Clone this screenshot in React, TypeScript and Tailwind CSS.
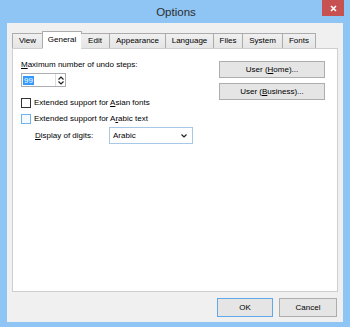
const tabs = ["View", "General", "Edit", "Appearance", "Language", "Files", "System", "Fonts"];
const tabWidths = [31, 40, 29, 56, 48, 29, 40, 33];

const Chevron = ({ up }: { up?: boolean }) => (
  <svg width="6" height="4" viewBox="0 0 6 4">
    <path d={up ? "M0.5 3.5 L3 1 L5.5 3.5" : "M0.5 0.5 L3 3 L5.5 0.5"} fill="none" stroke="#222" strokeWidth="1.2" />
  </svg>
);

const App = () => {
  return (
    <div
      className="w-[350px] h-[327px] bg-[#8ec5f4] flex flex-col text-[8px] text-black select-none"
      style={{ fontFamily: '"Liberation Sans", Arial, sans-serif' }}
    >
      {/* title bar */}
      <div className="h-[23px] flex items-start shrink-0">
        <div className="w-[28px]" />
        <div className="flex-1 text-center text-[11.5px] text-[#2d2d2d] pt-[4px] pl-[2px]">Options</div>
        <div className="w-[22px] h-[16px] bg-[#c75050] flex items-center justify-center mr-[6px]">
          <svg width="7" height="7" viewBox="0 0 7 7">
            <path d="M1 1 L6 6 M6 1 L1 6" stroke="#fff" strokeWidth="1.6" />
          </svg>
        </div>
      </div>

      {/* client area */}
      <div className="flex-1 mx-[7px] mb-[5px] bg-[#f0f0f0] flex flex-col px-[5px] pt-[8px]">
        {/* tabs */}
        <div className="flex items-end h-[17px] relative z-10">
          {tabs.map((t, i) =>
            i === 1 ? (
              <div
                key={t}
                style={{ width: tabWidths[i] }}
                className="h-[18px] -mb-px -ml-px -mr-px bg-white border border-[#acacac] border-b-white flex items-center justify-center pb-[1px]"
              >
                {t}
              </div>
            ) : (
              <div
                key={t}
                style={{ width: tabWidths[i] }}
                className="h-[15px] bg-gradient-to-b from-[#f0f0f0] to-[#e5e5e5] border border-[#acacac] border-b-0 border-l-0 first:border-l flex items-center justify-center"
              >
                {t}
              </div>
            )
          )}
        </div>

        {/* panel */}
        <div className="h-[244px] bg-white border border-[#cfcfcf] flex pl-[8px] pr-[12px] pt-[10px]">
          <div className="flex-1 flex flex-col">
            <div className="h-[12px] leading-[12px]">
              <u>M</u>aximum number of undo steps:
            </div>
            <div className="flex mt-[2px] h-[14px] w-[45px] border border-[#abadb3]">
              <div className="flex-1 flex items-center pl-[1px]">
                <span className="bg-[#3399ff] text-white px-[1px] leading-[9px]">99</span>
              </div>
              <div className="w-[10px] border-l border-[#dcdcdc] flex flex-col items-center justify-center gap-[1px]">
                <Chevron up />
                <Chevron />
              </div>
            </div>
            <div className="flex items-center mt-[10px] h-[11px]">
              <div className="w-[10px] h-[10px] border border-[#333] bg-white" />
              <span className="ml-[3px]">
                Extended support for <u>A</u>sian fonts
              </span>
            </div>
            <div className="flex items-center mt-[5px] h-[11px]">
              <div className="w-[10px] h-[10px] border border-[#6fb3ec] bg-[#f4f9fe]" />
              <span className="ml-[3px]">
                Extended support for A<u>r</u>abic text
              </span>
            </div>
            <div className="flex items-center mt-[3px] ml-[14px]">
              <span className="w-[74px]">
                <u>D</u>isplay of digits:
              </span>
              <div className="w-[84px] h-[17px] border border-[#a7c7e6] flex items-center justify-between pl-[3px] pr-[5px]">
                <span>Arabic</span>
                <Chevron />
              </div>
            </div>
          </div>
          <div className="flex flex-col gap-[5px] pt-[2px]">
            <div className="w-[106px] h-[17px] bg-[#e5e5e5] border border-[#adadad] flex items-center justify-center">
              User (<u>H</u>ome)...
            </div>
            <div className="w-[106px] h-[17px] bg-[#e5e5e5] border border-[#adadad] flex items-center justify-center">
              User (<u>B</u>usiness)...
            </div>
          </div>
        </div>

        {/* bottom buttons */}
        <div className="flex justify-end gap-[6px] mt-[6px] pr-[1px]">
          <div className="w-[56px] h-[19px] bg-[#e5e5e5] border border-[#5fa9ea] flex items-center justify-center">
            OK
          </div>
          <div className="w-[58px] h-[19px] bg-[#e5e5e5] border border-[#adadad] flex items-center justify-center">
            Cancel
          </div>
        </div>
      </div>
    </div>
  );
};

export default App;
